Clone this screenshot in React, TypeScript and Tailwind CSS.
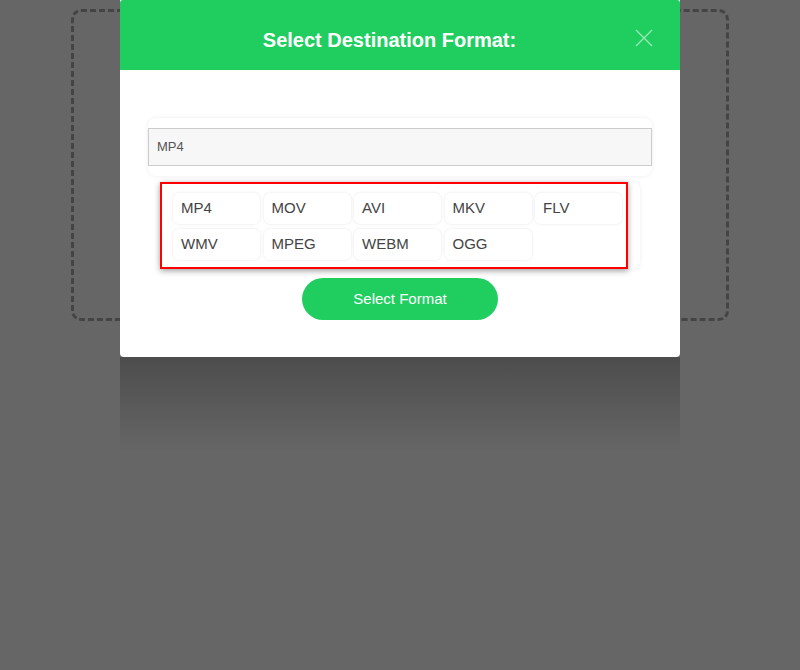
const FORMATS = ['MP4', 'MOV', 'AVI', 'MKV', 'FLV', 'WMV', 'MPEG', 'WEBM', 'OGG'];

function CloseIcon() {
  return (
    <svg width="18" height="18" viewBox="0 0 18 18" fill="none">
      <path d="M1 1L17 17M17 1L1 17" stroke="rgba(255,255,255,0.55)" strokeWidth="1.3" />
    </svg>
  );
}

export default function App() {
  return (
    <div
      className="relative min-h-[670px] w-full overflow-hidden bg-[#666666]"
      style={{ fontFamily: '"Liberation Sans", Arial, sans-serif' }}
    >
      {/* page content behind the overlay */}
      <div className="pt-[9px]">
        <div className="mx-[71px] h-[312px] rounded-[10px] border-[3px] border-dashed border-[#444444]" />
      </div>

      {/* modal */}
      <div className="absolute left-[120px] top-0 w-[560px]">
        <div className="bg-white rounded-b-[4px]">
          <div className="relative flex h-[70px] items-center justify-center rounded-t-[3px] bg-[#1fce5f] pr-[21px] pt-[10px]">
            <h2 className="text-[20px] font-bold text-white">Select Destination Format:</h2>
            <button className="absolute right-[27px] top-[29px]">
              <CloseIcon />
            </button>
          </div>

          <div className="flex flex-col items-center px-[28px] pb-[37px] pt-[48px]">
            <div className="w-full rounded-[8px] bg-white py-[10px] shadow-[0_0_4px_rgba(0,0,0,0.08)]">
              <div className="flex h-[38px] items-center border border-[#cccccc] bg-[#f7f7f7] px-[8px] text-[13px] text-[#555555]">
                MP4
              </div>
            </div>

            <div className="mt-[6px] flex w-full pl-[12px] pr-[12px]">
              <div className="w-full rounded-[8px] bg-white shadow-[0_0_4px_rgba(0,0,0,0.08)]">
                <div className="w-[468px] border-2 border-[#ff0000] px-[11px] pb-[7px] pt-[9px] shadow-[0_2px_6px_rgba(0,0,0,0.35)]">
                  <div className="grid grid-cols-[repeat(5,87px)] gap-x-[3.5px] gap-y-[5px]">
                    {FORMATS.map((f) => (
                      <div
                        key={f}
                        className="flex h-[31px] items-center rounded-[6px] bg-white px-[8px] text-[15px] text-[#444444] shadow-[0_0_3px_rgba(0,0,0,0.1)]"
                      >
                        {f}
                      </div>
                    ))}
                  </div>
                </div>
              </div>
            </div>

            <button className="mt-[9px] flex h-[42px] w-[196px] items-center justify-center rounded-full bg-[#1fce5f] text-[15px] text-white">
              Select Format
            </button>
          </div>
        </div>
        <div className="h-[95px] bg-gradient-to-b from-black/25 to-transparent" />
      </div>
    </div>
  );
}
